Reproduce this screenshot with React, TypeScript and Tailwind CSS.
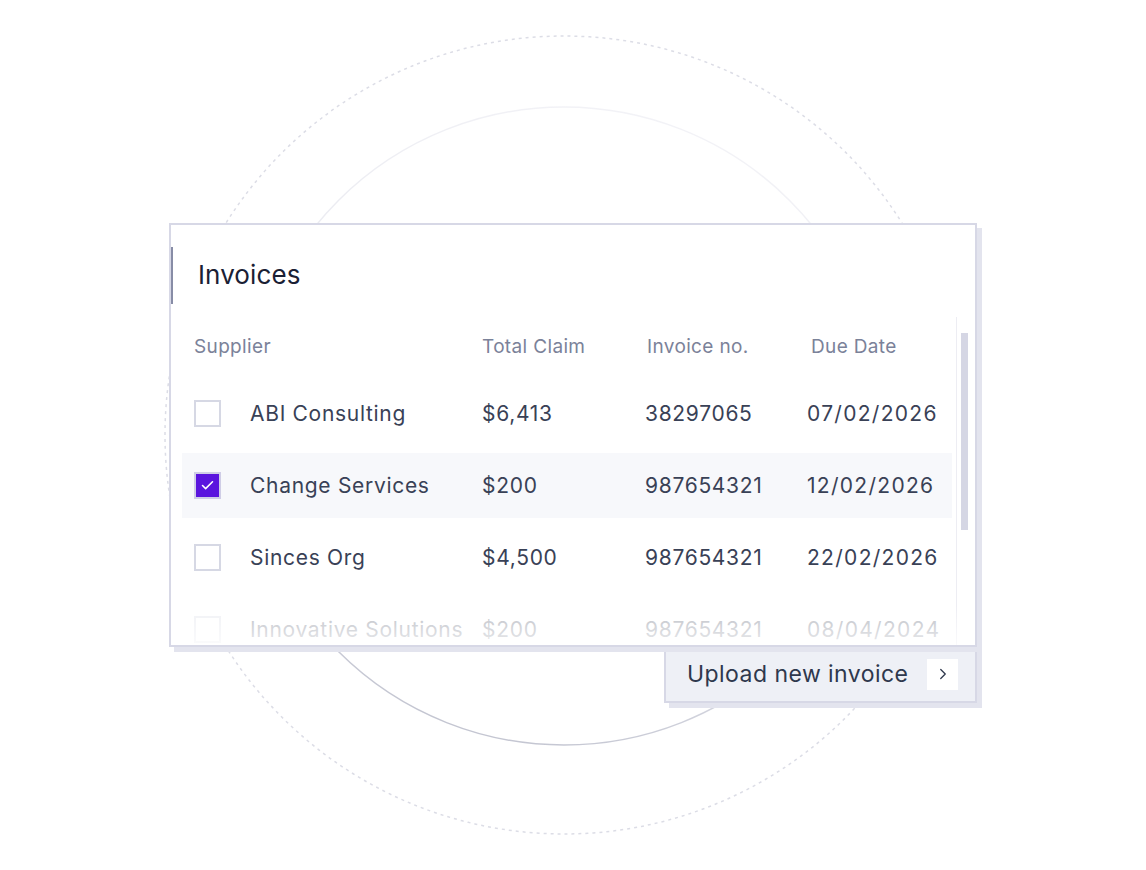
import { ChevronRight, Check } from 'lucide-react';

type Invoice = {
  supplier: string;
  total: string;
  number: string;
  due: string;
  checked?: boolean;
};

const invoices: Invoice[] = [
  { supplier: 'ABI Consulting', total: '$6,413', number: '38297065', due: '07/02/2026' },
  { supplier: 'Change Services', total: '$200', number: '987654321', due: '12/02/2026', checked: true },
  { supplier: 'Sinces Org', total: '$4,500', number: '987654321', due: '22/02/2026' },
  { supplier: 'Innovative Solutions', total: '$200', number: '987654321', due: '08/04/2024' },
];

function Backdrop() {
  return (
    <svg className="absolute inset-0 pointer-events-none" width="1146" height="870" viewBox="0 0 1146 870">
      <defs>
        <linearGradient id="ring" x1="0.7" y1="0" x2="0.35" y2="1">
          <stop offset="0" stopColor="#f3f3f7" />
          <stop offset="0.6" stopColor="#e6e7ee" />
          <stop offset="1" stopColor="#c2c4d0" />
        </linearGradient>
      </defs>
      <circle cx="564" cy="435" r="399" fill="none" stroke="#dcdde6" strokeWidth="1.5" strokeDasharray="3 4" />
      <circle cx="564" cy="426" r="319" fill="none" stroke="url(#ring)" strokeWidth="1.5" />
    </svg>
  );
}

function Checkbox({ checked }: { checked?: boolean }) {
  return (
    <div
      className={`w-[27px] h-[27px] shrink-0 border-2 flex items-center justify-center ${
        checked ? 'border-[#cfcde6] bg-[#5a14de]' : 'border-[#d6d8e4] bg-white'
      }`}
    >
      {checked && <Check size={15} strokeWidth={2.5} className="text-white" />}
    </div>
  );
}

export default function App() {
  return (
    <div
      className="relative w-full h-[870px] bg-white overflow-hidden"
      style={{ fontFamily: 'Inter, "Open Sans", sans-serif' }}
    >
      <Backdrop />

      <div className="relative pt-[223px] pl-[169px] flex flex-col items-start">
        {/* card */}
        <div className="relative w-[808px] h-[424px] bg-white border-2 border-[#d7d8e6] shadow-[5px_5px_0_#e3e4ee] overflow-hidden">
          <div className="absolute left-[-1px] top-[22px] w-[3px] h-[57px] bg-[#878ca6]" />

          <div className="h-[92px] pl-[27px] flex items-center">
            <h2 className="text-[26px] text-[#1a2034] tracking-[0.1px] mt-[6px]">Invoices</h2>
          </div>

          <div className="flex h-[330px]">
            <div className="ml-[11px] w-[772px] pt-[16px]">
              <div className="grid grid-cols-[288px_165px_164px_1fr] pl-[12px] h-[24px] items-center text-[19px] text-[#7b8299] tracking-[0.35px] mb-[24px]">
                <span>Supplier</span>
                <span>Total Claim</span>
                <span>Invoice no.</span>
                <span>Due Date</span>
              </div>

              <div className="flex flex-col gap-[7px]">
                {invoices.map((inv, i) => (
                  <div
                    key={inv.supplier}
                    className={`grid grid-cols-[288px_163px_162px_1fr] pl-[12px] h-[65px] items-center text-[21px] text-[#394156] tracking-[0.7px] ${
                      inv.checked ? 'bg-[#f7f8fb]' : ''
                    } ${i === 3 ? 'opacity-35' : ''}`}
                  >
                    <div className="flex items-center gap-[29px]">
                      <Checkbox checked={inv.checked} />
                      <span className="whitespace-nowrap">{inv.supplier}</span>
                    </div>
                    <span>{inv.total}</span>
                    <span>{inv.number}</span>
                    <span className="tracking-[1.3px] whitespace-nowrap">{inv.due}</span>
                  </div>
                ))}
              </div>
            </div>

            {/* scrollbar */}
            <div className="ml-[4px] w-[19px] border-l border-[#ededf3] pl-[4px] pt-[16px]">
              <div className="w-[7px] h-[197px] bg-[#d5d6e4]" />
            </div>
          </div>

          <div className="absolute left-0 right-0 bottom-0 h-[40px] bg-gradient-to-b from-white/0 to-white/70 pointer-events-none" />
        </div>

        {/* upload button */}
        <button className="self-start ml-[495px] -mt-[2px] w-[313px] h-[58px] bg-[#eef0f6] border-2 border-[#d7d8e6] shadow-[5px_5px_0_#e3e4ee] flex items-center justify-between pl-[21px] pr-[17px]">
          <span className="text-[23px] text-[#2f384d] tracking-[0.45px]">Upload new invoice</span>
          <span className="w-[31px] h-[31px] bg-white flex items-center justify-center text-[#2f384d]">
            <ChevronRight size={18} strokeWidth={1.75} />
          </span>
        </button>
      </div>
    </div>
  );
}
